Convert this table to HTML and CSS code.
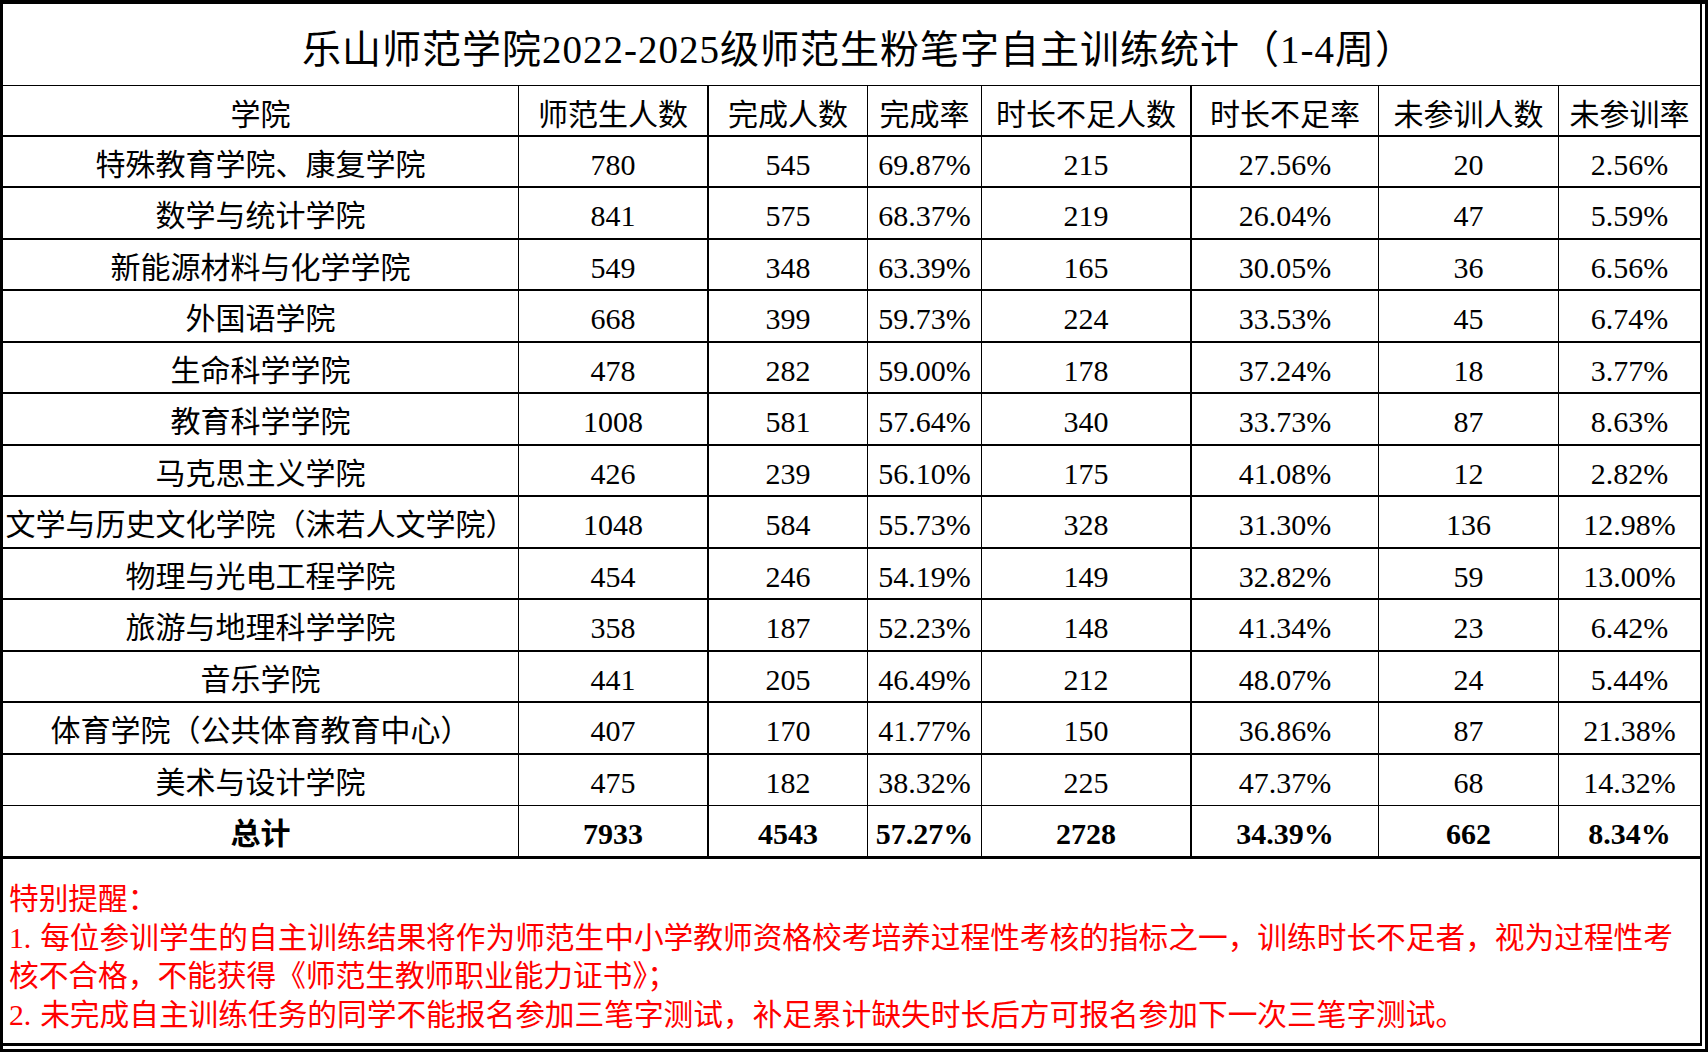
FILE: index.html
```html
<!DOCTYPE html>
<html lang="zh-CN">
<head>
<meta charset="utf-8">
<title>乐山师范学院2022-2025级师范生粉笔字自主训练统计（1-4周）</title>
<link rel="stylesheet" href="styles.css">
</head>
<body>
<div class="frame">
  <div class="sheet">
    <div class="title">乐山师范学院2022-2025级师范生粉笔字自主训练统计（1-4周）</div>
    <div class="row head">
      <div class="cell">学院</div><div class="cell c2">师范生人数</div><div class="cell">完成人数</div><div class="cell">完成率</div><div class="cell c5">时长不足人数</div><div class="cell">时长不足率</div><div class="cell">未参训人数</div><div class="cell">未参训率</div>
    </div>
    <div class="row">
      <div class="cell">特殊教育学院、康复学院</div><div class="cell c2">780</div><div class="cell">545</div><div class="cell">69.87%</div><div class="cell c5">215</div><div class="cell">27.56%</div><div class="cell">20</div><div class="cell">2.56%</div>
    </div>
    <div class="row">
      <div class="cell">数学与统计学院</div><div class="cell c2">841</div><div class="cell">575</div><div class="cell">68.37%</div><div class="cell c5">219</div><div class="cell">26.04%</div><div class="cell">47</div><div class="cell">5.59%</div>
    </div>
    <div class="row">
      <div class="cell">新能源材料与化学学院</div><div class="cell c2">549</div><div class="cell">348</div><div class="cell">63.39%</div><div class="cell c5">165</div><div class="cell">30.05%</div><div class="cell">36</div><div class="cell">6.56%</div>
    </div>
    <div class="row">
      <div class="cell">外国语学院</div><div class="cell c2">668</div><div class="cell">399</div><div class="cell">59.73%</div><div class="cell c5">224</div><div class="cell">33.53%</div><div class="cell">45</div><div class="cell">6.74%</div>
    </div>
    <div class="row">
      <div class="cell">生命科学学院</div><div class="cell c2">478</div><div class="cell">282</div><div class="cell">59.00%</div><div class="cell c5">178</div><div class="cell">37.24%</div><div class="cell">18</div><div class="cell">3.77%</div>
    </div>
    <div class="row">
      <div class="cell">教育科学学院</div><div class="cell c2">1008</div><div class="cell">581</div><div class="cell">57.64%</div><div class="cell c5">340</div><div class="cell">33.73%</div><div class="cell">87</div><div class="cell">8.63%</div>
    </div>
    <div class="row">
      <div class="cell">马克思主义学院</div><div class="cell c2">426</div><div class="cell">239</div><div class="cell">56.10%</div><div class="cell c5">175</div><div class="cell">41.08%</div><div class="cell">12</div><div class="cell">2.82%</div>
    </div>
    <div class="row">
      <div class="cell">文学与历史文化学院（沫若人文学院）</div><div class="cell c2">1048</div><div class="cell">584</div><div class="cell">55.73%</div><div class="cell c5">328</div><div class="cell">31.30%</div><div class="cell">136</div><div class="cell">12.98%</div>
    </div>
    <div class="row">
      <div class="cell">物理与光电工程学院</div><div class="cell c2">454</div><div class="cell">246</div><div class="cell">54.19%</div><div class="cell c5">149</div><div class="cell">32.82%</div><div class="cell">59</div><div class="cell">13.00%</div>
    </div>
    <div class="row">
      <div class="cell">旅游与地理科学学院</div><div class="cell c2">358</div><div class="cell">187</div><div class="cell">52.23%</div><div class="cell c5">148</div><div class="cell">41.34%</div><div class="cell">23</div><div class="cell">6.42%</div>
    </div>
    <div class="row">
      <div class="cell">音乐学院</div><div class="cell c2">441</div><div class="cell">205</div><div class="cell">46.49%</div><div class="cell c5">212</div><div class="cell">48.07%</div><div class="cell">24</div><div class="cell">5.44%</div>
    </div>
    <div class="row">
      <div class="cell">体育学院（公共体育教育中心）</div><div class="cell c2">407</div><div class="cell">170</div><div class="cell">41.77%</div><div class="cell c5">150</div><div class="cell">36.86%</div><div class="cell">87</div><div class="cell">21.38%</div>
    </div>
    <div class="row last">
      <div class="cell">美术与设计学院</div><div class="cell c2">475</div><div class="cell">182</div><div class="cell">38.32%</div><div class="cell c5">225</div><div class="cell">47.37%</div><div class="cell">68</div><div class="cell">14.32%</div>
    </div>
    <div class="row total">
      <div class="cell">总计</div><div class="cell c2">7933</div><div class="cell">4543</div><div class="cell">57.27%</div><div class="cell c5">2728</div><div class="cell">34.39%</div><div class="cell">662</div><div class="cell">8.34%</div>
    </div>
    <div class="notes">
      <div class="line">特别提醒：</div>
      <div class="line"><span class="lead">1.</span>每位参训学生的自主训练结果将作为师范生中小学教师资格校考培养过程性考核的指标之一，训练时长不足者，视为过程性考</div>
      <div class="line">核不合格，不能获得《师范生教师职业能力证书》；</div>
      <div class="line"><span class="lead">2.</span>未完成自主训练任务的同学不能报名参加三笔字测试，补足累计缺失时长后方可报名参加下一次三笔字测试。</div>
    </div>
  </div>
</div>
</body>
</html>
```

FILE: styles.css
```css
html, body {
  margin: 0;
  padding: 0;
  background: #ffffff;
}

body {
  font-family: "Liberation Serif", "Noto Sans CJK SC", serif;
  color: #000000;
}

.frame {
  width: 1708px;
  height: 1052px;
  box-sizing: border-box;
  border-top: 4px solid #000;
  border-left: 3px solid #000;
  border-right: 3px solid #000;
  border-bottom: 3px solid #000;
  padding: 0 3px 3px 0;
}

.sheet {
  height: 100%;
  box-sizing: border-box;
  border-right: 2px solid #000;
  border-bottom: 3px solid #000;
  display: flex;
  flex-direction: column;
}

.title {
  height: 82px;
  box-sizing: border-box;
  border-bottom: 1px solid #000;
  display: flex;
  align-items: center;
  justify-content: center;
  padding-top: 10px;
  padding-left: 14px;
  font-size: 39px;
  letter-spacing: 1px;
  line-height: 1;
  white-space: nowrap;
}

.row {
  display: grid;
  grid-template-columns: 516px 190px 159px 114px 210px 187px 180px 1fr;
  height: 52px;
  box-sizing: border-box;
  border-bottom: 2px solid #000;
  font-size: 30px;
  line-height: 1;
}

.row:nth-child(odd) {
  height: 51px;
}

.row.head {
  height: 51px;
}

.row.head .cell {
  padding-top: 8px;
}

.row.last {
  border-bottom-width: 1px;
}

.row.total {
  height: 53px;
  border-bottom-width: 3px;
  font-weight: bold;
}

.cell {
  display: flex;
  align-items: center;
  justify-content: center;
  border-right: 1px solid #000;
  white-space: nowrap;
  overflow: hidden;
  padding-top: 6px;
}

.cell:last-child {
  border-right: none;
}

.cell.c2 {
  border-left: 1px solid #000;
  border-right-width: 2px;
  margin-left: -1px;
}

.cell.c5 {
  border-right-width: 2px;
}

.notes {
  flex: 1;
  padding: 21px 0 0 6px;
  color: #ff0000;
  font-size: 29.7px;
  line-height: 38.6px;
}

.line {
  white-space: nowrap;
}

.lead {
  display: inline-block;
  width: 1.05em;
}
```
